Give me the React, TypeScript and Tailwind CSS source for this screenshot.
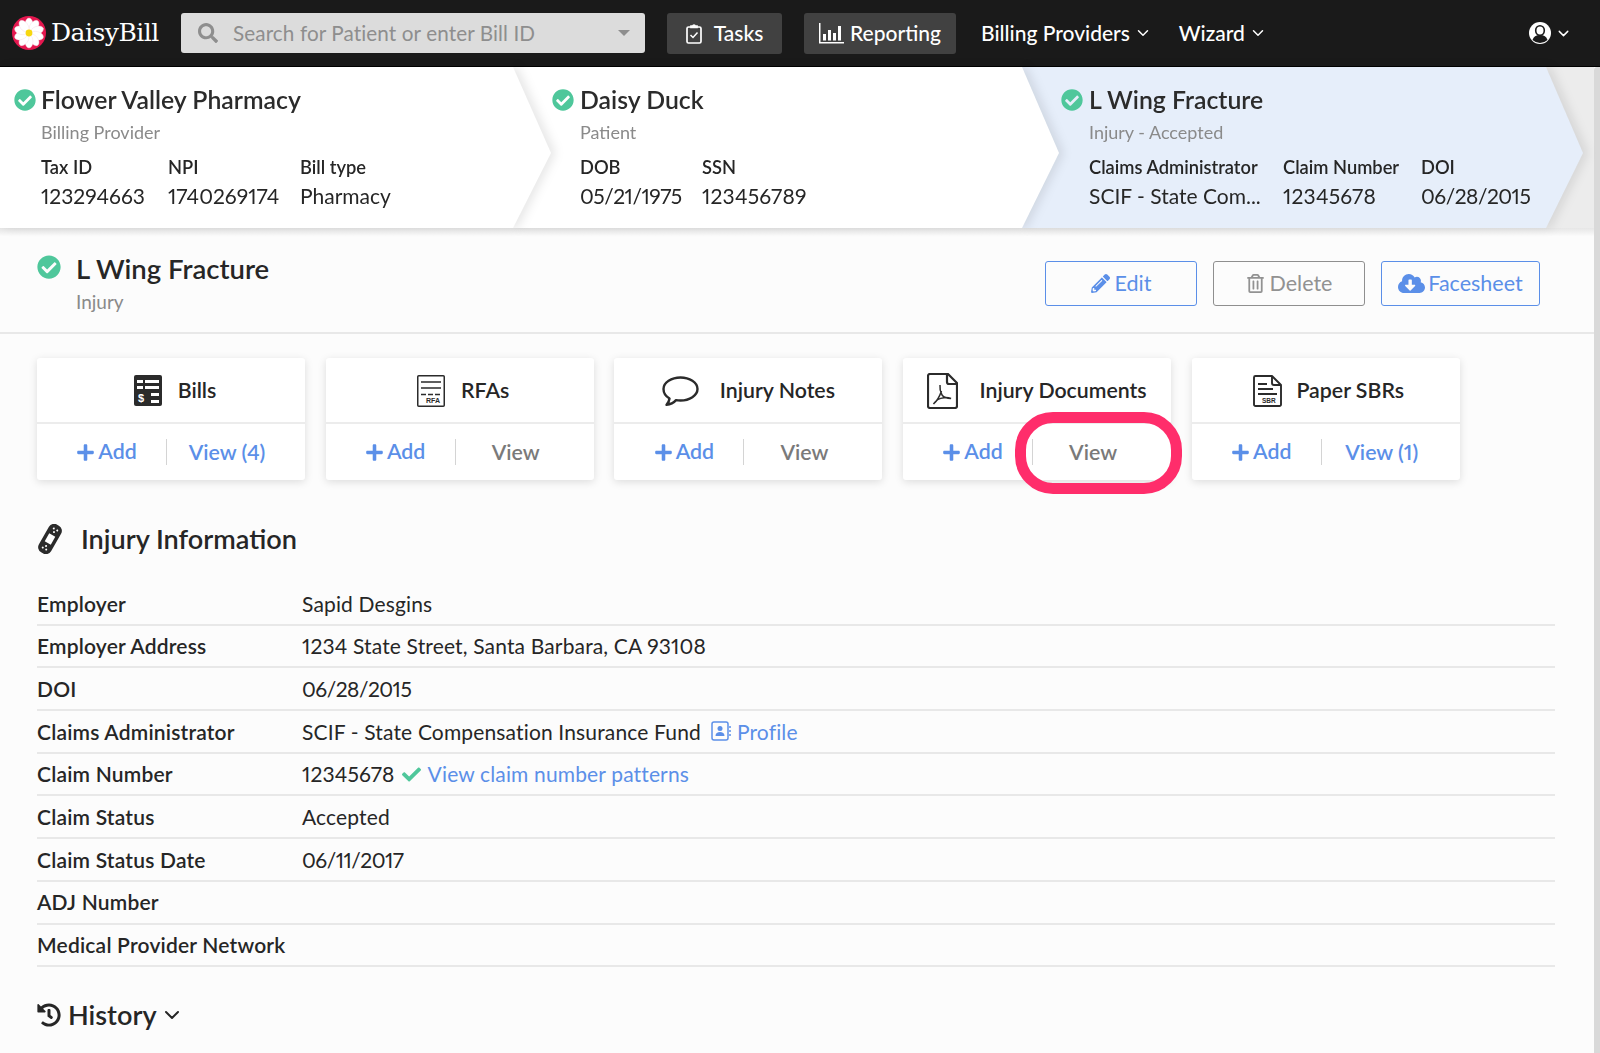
import { ChevronDown } from "lucide-react"
import { FaCheck, FaCheckCircle, FaCloudDownloadAlt, FaHistory, FaPencilAlt, FaPlus, FaRegTrashAlt, FaSearch } from "react-icons/fa"

function Logo() {
  const petals = [0, 36, 72, 108, 144, 180, 216, 252, 288, 324]
  return (
    <svg width="34" height="34" viewBox="0 0 34 34">
      <circle cx="17" cy="17" r="17" fill="#e5174f" />
      {petals.map((a) => (
        <ellipse key={a} cx="17" cy="8.5" rx="4" ry="6.5" fill="#fff" stroke="#f4d9e0" strokeWidth="0.4" transform={`rotate(${a} 17 17)`} />
      ))}
      <circle cx="17" cy="17" r="3.4" fill="#f7d70f" />
    </svg>
  )
}

function ClipboardIcon() {
  return (
    <svg width="16" height="21" viewBox="0 0 16 21" fill="none" stroke="#fff" strokeWidth="1.7">
      <rect x="1" y="4" width="14" height="16" rx="1.5" />
      <path d="M5 4.5V3h2a1 1 0 0 1 2 0h2v1.5z" fill="#fff" />
      <path d="M4.5 12l2.5 2.5 4.500-5" strokeWidth="1.5" />
    </svg>
  )
}

function ChartIcon() {
  return (
    <svg width="25" height="21" viewBox="0 0 25 21" fill="#fff">
      <path d="M0 0h1.500v19H25v1.500H0z" />
      <rect x="4" y="11" width="3" height="6.500" />
      <rect x="9" y="7" width="3" height="10.500" />
      <rect x="14" y="10" width="3" height="7.500" />
      <rect x="19" y="3" width="3" height="14.500" />
    </svg>
  )
}

function UserIcon() {
  return (
    <svg width="22" height="22" viewBox="0 0 22 22">
      <circle cx="11" cy="11" r="11" fill="#fff" />
      <ellipse cx="11" cy="8.500" rx="4.300" ry="4.800" fill="none" stroke="#1a1a1a" strokeWidth="1.600" />
      <path d="M3.500 18c1-3.500 3.500-5 7.500-5s6.500 1.500 7.500 5a11 11 0 0 1-15 0z" fill="#1a1a1a" />
    </svg>
  )
}

function BillsIcon() {
  return (
    <svg width="28" height="31" viewBox="0 0 28 31">
      <rect width="28" height="31" rx="2" fill="#2b2b2b" />
      <g fill="#fff">
        <rect x="3" y="5" width="6" height="3" />
        <rect x="11" y="5" width="14" height="3" />
        <rect x="3" y="11" width="6" height="3" />
        <rect x="11" y="11" width="14" height="3" />
        <rect x="17" y="18" width="8" height="3" />
        <rect x="17" y="25" width="8" height="3" />
      </g>
      <text x="4" y="27" fill="#fff" fontSize="11" fontWeight="700" fontFamily="Liberation Sans, sans-serif">$</text>
    </svg>
  )
}

function RfaIcon() {
  return (
    <svg width="28" height="32" viewBox="0 0 28 32" fill="none" stroke="#2b2b2b">
      <rect x="0.750" y="0.750" width="26.500" height="30.500" rx="1" strokeWidth="1.500" />
      <path d="M4 7h20M4 13h20" strokeWidth="1.500" />
      <path d="M4 19.500h20" strokeWidth="1.500" strokeDasharray="5 2" />
      <text x="9" y="28" fill="#2b2b2b" stroke="none" fontSize="7" fontWeight="700" fontFamily="Liberation Sans, sans-serif">RFA</text>
    </svg>
  )
}

function BubbleIcon() {
  return (
    <svg width="37" height="30" viewBox="0 0 37 30" fill="none" stroke="#2b2b2b" strokeWidth="2.400">
      <path d="M18.500 1.500c9 0 17 5 17 11.500s-8 11.500-17 11.500c-1.500 0-3-.1-4.500-.4C11.500 27 8 28.500 4.500 28.800c1.500-1.500 2.700-3.600 3-6.300C3.700 20.300 1.500 17 1.500 13c0-6.500 8-11.500 17-11.500z" strokeLinejoin="round" />
    </svg>
  )
}

function PdfIcon() {
  return (
    <svg width="31" height="36" viewBox="0 0 31 36" fill="none" stroke="#2b2b2b" strokeWidth="2.200">
      <path d="M21 1H3a2 2 0 0 0-2 2v30a2 2 0 0 0 2 2h25a2 2 0 0 0 2-2V10z" strokeLinejoin="round" />
      <path d="M20 1.500V9a2 2 0 0 0 2 2h8" />
      <path d="M13 12c-.5 4 .5 7 2 10 1.500 2 5 3.500 9 3.500-4-1.500-10-1-13 1-2 1.300-3.500 3-4.500 4.500 2.500-2 5.500-6 8-13" strokeWidth="1.500" />
    </svg>
  )
}

function SbrIcon() {
  return (
    <svg width="29" height="32" viewBox="0 0 29 32" fill="none" stroke="#2b2b2b" strokeWidth="1.900">
      <path d="M19 1H2.500A1.500 1.500 0 0 0 1 2.500v27A1.500 1.500 0 0 0 2.500 31h24a1.500 1.500 0 0 0 1.500-1.500V10z" strokeLinejoin="round" />
      <path d="M19 1v7a2 2 0 0 0 2 2h7" />
      <path d="M5 9h9M5 14h15M5 19h19" />
      <text x="9" y="28" fill="#2b2b2b" stroke="none" fontSize="6.500" fontWeight="700" fontFamily="Liberation Sans, sans-serif">SBR</text>
    </svg>
  )
}

function BandageIcon() {
  return (
    <svg width="26" height="30" viewBox="0 0 26 30">
      <g transform="rotate(30 13 15)">
        <rect x="6" y="-1" width="14" height="32" rx="6" fill="#2b2b2b" />
        <rect x="9.500" y="10.500" width="7" height="9" fill="#fff" />
        <g fill="#fff">
          <circle cx="11" cy="4" r="1" />
          <circle cx="15" cy="4" r="1" />
          <circle cx="13" cy="7" r="1" />
          <circle cx="11" cy="26" r="1" />
          <circle cx="15" cy="26" r="1" />
          <circle cx="13" cy="23" r="1" />
        </g>
      </g>
    </svg>
  )
}

function ProfileIcon() {
  return (
    <svg width="20" height="20" viewBox="0 0 20 20" fill="none" stroke="#5b8fe8">
      <rect x="1" y="1" width="16" height="18" rx="2" strokeWidth="1.500" />
      <circle cx="9" cy="7.500" r="2.500" fill="#5b8fe8" stroke="none" />
      <path d="M4.500 15c0-3 2-4 4.500-4s4.500 1 4.500 4z" fill="#5b8fe8" stroke="none" />
      <path d="M19 5v2M19 9v2M19 13v2" strokeWidth="1.500" />
    </svg>
  )
}

function Check({ className }: { className: string }) {
  return <FaCheckCircle className={`text-[#4fc79b] ${className}`} />
}

const crumbs = [
  {
    wrap: "z-30 w-[551px]",
    shape: "bg-white pl-[41px] [clip-path:polygon(0_0,513px_0,551px_86px,513px_161px,0_161px)]",
    icon: "left-[14px]",
    title: "Flower Valley Pharmacy",
    sub: "Billing Provider",
    cols: [
      { w: "w-[127px]", label: "Tax ID", value: "123294663", v: "" },
      { w: "w-[132px]", label: "NPI", value: "1740269174", v: "" },
      { w: "w-[120px]", label: "Bill type", value: "Pharmacy", v: "" },
    ],
  },
  {
    wrap: "z-20 w-[546px] -ml-[38px]",
    shape: "bg-white pl-[67px] [clip-path:polygon(0_0,509px_0,546px_86px,509px_161px,0_161px)]",
    icon: "left-[39px]",
    title: "Daisy Duck",
    sub: "Patient",
    cols: [
      { w: "w-[122px]", label: "DOB", value: "05/21/1975", v: "tracking-[-0.5px]" },
      { w: "w-[120px]", label: "SSN", value: "123456789", v: "tracking-[0.2px]" },
    ],
  },
  {
    wrap: "z-10 w-[561px] -ml-[37px]",
    shape: "bg-[#e6eefa] pl-[67px] [clip-path:polygon(0_0,524px_0,561px_86px,524px_161px,0_161px)]",
    icon: "left-[39px]",
    title: "L Wing Fracture",
    sub: "Injury - Accepted",
    cols: [
      { w: "w-[194px]", label: "Claims Administrator", value: "SCIF - State Com...", v: "" },
      { w: "w-[138px]", label: "Claim Number", value: "12345678", v: "tracking-[0.2px]" },
      { w: "w-[110px]", label: "DOI", value: "06/28/2015", v: "tracking-[-0.5px]" },
    ],
  },
]

const cards = [
  { name: "Bills", head: "gap-[16px] pl-[8px]", icon: <BillsIcon />, view: "View (4)", on: true, ring: false },
  { name: "RFAs", head: "gap-[16px] pl-[7px]", icon: <RfaIcon />, view: "View", on: false, ring: false },
  { name: "Injury Notes", head: "gap-[21px]", icon: <BubbleIcon />, view: "View", on: false, ring: false },
  { name: "Injury Documents", head: "gap-[21px]", icon: <PdfIcon />, view: "View", on: false, ring: true },
  { name: "Paper SBRs", head: "gap-[14px] pl-[6px]", icon: <SbrIcon />, view: "View (1)", on: true, ring: false },
]

export default function App() {
  return (
    <div className="w-[1600px] h-[1053px] overflow-hidden flex flex-col bg-[#fcfcfc] text-[20px] text-[#262626] proportional-nums [font-family:Lato,'Liberation_Sans',sans-serif]">
      <header className="h-[67px] shrink-0 flex items-center bg-[#1a1a1a] border-b border-black text-white pl-[12px] text-[21px]">
        <Logo />
        <span className="ml-[5px] w-[130px] text-[25px] tracking-[-0.5px] [font-family:'DejaVu_Serif',serif]">DaisyBill</span>
        <div className="w-[464px] h-[40px] rounded-[3px] bg-[#dcdcdc] flex items-center pl-[17px] pr-[15px] text-[#8e8e8e]">
          <FaSearch className="text-[20px] mr-[15px]" />
          <span className="flex-1 pt-[2px] text-[20.700px] tracking-[0.1px]">Search for Patient or enter Bill ID</span>
          <span className="border-x-[6px] border-t-[6px] border-x-transparent border-t-[#8e8e8e]" />
        </div>
        <div className="ml-[22px] w-[115px] h-[41px] rounded-[3px] bg-[#414141] flex items-center justify-center gap-[12px] font-medium">
          <ClipboardIcon />
          Tasks
        </div>
        <div className="ml-[22px] w-[152px] h-[41px] rounded-[3px] bg-[#414141] flex items-center justify-center gap-[6px] font-medium">
          <ChartIcon />
          Reporting
        </div>
        <div className="ml-[25px] flex items-center gap-[4px] font-medium">
          Billing Providers <ChevronDown size={18} />
        </div>
        <div className="ml-[27px] flex items-center gap-[4px] font-medium">
          Wizard <ChevronDown size={18} />
        </div>
        <div className="ml-auto mr-[28px] flex items-center gap-[4px]">
          <UserIcon />
          <ChevronDown size={17} />
        </div>
      </header>

      <div className="flex-1 flex min-h-0">
        <main className="w-[1594px]">
          <div className="h-[161px] flex bg-[#ececec]">
            {crumbs.map((c) => (
              <div key={c.title} className={`relative h-full [filter:drop-shadow(5px_0_5px_rgba(0,0,0,0.09))] ${c.wrap}`}>
                <div className={`h-full pt-[17px] ${c.shape}`}>
                  <Check className={`absolute top-[22px] text-[22px] ${c.icon}`} />
                  <div className="text-[24.800px] leading-[32px] font-semibold text-[#2b2b2b]">{c.title}</div>
                  <div className="mt-[4px] text-[18px] leading-[24px] text-[#8a8a8a]">{c.sub}</div>
                  <div className="mt-[11px] flex">
                    {c.cols.map((col) => (
                      <div key={col.label} className={col.w}>
                        <div className="text-[18.300px] leading-[24px] font-semibold whitespace-nowrap">{col.label}</div>
                        <div className={`mt-[5px] text-[21px] leading-[24px] whitespace-nowrap ${col.v}`}>{col.value}</div>
                      </div>
                    ))}
                  </div>
                </div>
              </div>
            ))}
          </div>
          <div className="h-[8px] bg-gradient-to-b from-[#e6e6e6] to-[#fbfbfb]" />

          <section className="h-[98px] border-b-2 border-[#e8e8e8] flex items-start pl-[37px] pr-[54px]">
            <Check className="mt-[19px] text-[24px]" />
            <div className="ml-[15px] pt-[15px]">
              <div className="text-[27.500px] leading-[36px] font-semibold">L Wing Fracture</div>
              <div className="mt-[2px] text-[19px] leading-[26px] text-[#8a8a8a]">Injury</div>
            </div>
            <div className="ml-auto mt-[25px] flex gap-[16px] text-[21.500px]">
              <button className="w-[152px] h-[45px] rounded-[3px] border border-[#5b8fe8] text-[#5b8fe8] flex items-center justify-center gap-[5px]">
                <FaPencilAlt className="text-[19px]" /> Edit
              </button>
              <button className="w-[152px] h-[45px] rounded-[3px] border border-[#8f8f8f] text-[#929292] flex items-center justify-center gap-[5px]">
                <FaRegTrashAlt className="text-[19px]" /> Delete
              </button>
              <button className="w-[159px] h-[45px] rounded-[3px] border border-[#5b8fe8] text-[#5b8fe8] flex items-center justify-center gap-[3px]">
                <FaCloudDownloadAlt className="text-[27px]" /> Facesheet
              </button>
            </div>
          </section>

          <section className="mt-[24px] pl-[37px] flex gap-[20.700px]">
            {cards.map((card) => (
              <div key={card.name} className="relative w-[268px] h-[122px] bg-white rounded-[3px] shadow-[0_2px_8px_rgba(0,0,0,0.13)]">
                <div className={`h-[66px] pt-[1px] border-b-2 border-[#ececec] flex items-center justify-center text-[21.300px] font-semibold ${card.head}`}>
                  {card.icon}
                  {card.name}
                </div>
                <div className="h-[56px] pl-[10px] flex items-center text-[21.300px] font-semibold">
                  <div className="w-[120px] h-[26px] border-r border-[#d4d4d4] flex items-center justify-center gap-[3px] text-[#5b8fe8]">
                    <FaPlus className="text-[19px]" /> Add
                  </div>
                  <div className={`w-[120px] pt-[2px] text-center ${card.on ? "text-[#5b8fe8]" : "text-[#7a7a7a]"}`}>{card.view}</div>
                </div>
                {card.ring && (
                  <div className="absolute left-[112px] top-[54px] w-[167px] h-[82px] rounded-[38px] border-[11px] border-[#ff2d6b]" />
                )}
              </div>
            ))}
          </section>

          <section className="pl-[37px] pr-[39px]">
            <div className="mt-[39px] h-[40px] flex items-center gap-[18px] text-[27.100px] font-semibold">
              <BandageIcon />
              Injury Information
            </div>
            <div className="mt-[24px]">
              <Row label="Employer">Sapid Desgins</Row>
              <Row label="Employer Address">1234 State Street, Santa Barbara, CA 93108</Row>
              <Row label="DOI"><span className="tracking-[-0.5px]">06/28/2015</span></Row>
              <Row label="Claims Administrator">
                SCIF - State Compensation Insurance Fund
                <span className="ml-[10px] mr-[6px]"><ProfileIcon /></span>
                <span className="text-[#5b8fe8]">Profile</span>
              </Row>
              <Row label="Claim Number">
                12345678
                <FaCheck className="mx-[7px] text-[19px] text-[#4fc79b]" />
                <span className="text-[#5b8fe8]">View claim number patterns</span>
              </Row>
              <Row label="Claim Status">Accepted</Row>
              <Row label="Claim Status Date"><span className="tracking-[-0.5px]">06/11/2017</span></Row>
              <Row label="ADJ Number" />
              <Row label="Medical Provider Network" />
            </div>
            <div className="mt-[33px] h-[30px] flex items-center text-[27.100px] font-semibold">
              <FaHistory className="text-[24px] mr-[7px]" />
              History
              <ChevronDown size={24} className="ml-[3px]" />
            </div>
          </section>
        </main>
        <div className="w-[6px] bg-[#d9d9d9] rounded-tl-[3px]" />
      </div>
    </div>
  )
}

function Row({ label, children }: { label: string; children?: React.ReactNode }) {
  return (
    <div className="h-[42.700px] border-b-2 border-[#e8e8e8] flex items-center">
      <div className="w-[265px] font-semibold text-[21px] tracking-[0.2px]">{label}</div>
      <div className="flex items-center text-[21px] tracking-[0.15px]">{children}</div>
    </div>
  )
}
